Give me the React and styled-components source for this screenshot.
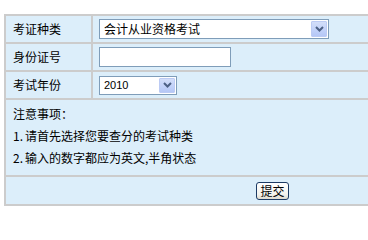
import React from "react";
import styled, { createGlobalStyle } from "styled-components";

const GlobalStyle = createGlobalStyle`
  html, body {
    margin: 0;
    background: #ffffff;
    overflow: hidden;
  }
  body {
    font-family: "Noto Sans CJK SC", "DejaVu Sans", sans-serif;
    font-size: 12px;
    color: #000000;
  }
`;

const Page = styled.div`
  width: 364px;
  padding: 14px 0 0 4px;
  overflow: hidden;
`;

const FormTable = styled.div`
  display: grid;
  grid-template-columns: 85px 1fr;
  grid-template-rows: 26px 26px 26px 75px 27px;
  gap: 2px;
  padding: 2px;
  width: 533px;
  background: #cccccc;
`;

const LabelCell = styled.div`
  background: #dceefa;
  display: flex;
  align-items: center;
  padding-left: 7px;
  line-height: 1;
`;

const FieldCell = styled.div`
  background: #dceefa;
  display: flex;
  align-items: center;
  padding-left: 6px;
`;

const NoticeCell = styled.div`
  grid-column: 1 / -1;
  background: #dceefa;
  padding: 3px 7px;
  line-height: 22px;
`;

const SubmitCell = styled.div`
  grid-column: 1 / -1;
  background: #dceefa;
  display: flex;
  align-items: center;
  justify-content: center;
`;

const SelectBox = styled.div`
  box-sizing: border-box;
  width: ${(p) => p.$width}px;
  height: ${(p) => p.$height}px;
  border: 1px solid #7f9db9;
  background: #ffffff;
  display: flex;
  align-items: center;
  padding: 1px;
`;

const SelectText = styled.span`
  flex: 1;
  padding-left: 3px;
  font-family: ${(p) =>
    p.$latin ? '"Liberation Sans", Arial, sans-serif' : "inherit"};
  font-size: ${(p) => (p.$latin ? "11px" : "12px")};
  line-height: 1;
`;

const ArrowButton = styled.span`
  box-sizing: border-box;
  width: 16px;
  height: 100%;
  border: 1px solid #bccbf4;
  border-radius: 1px;
  background: linear-gradient(180deg, #d3def9 0%, #c1d1f9 60%, #b5c7f6 100%);
  display: flex;
  align-items: center;
  justify-content: center;
`;

const TextInput = styled.input`
  box-sizing: border-box;
  width: 132px;
  height: 20px;
  border: 1px solid #7f9db9;
  background: #ffffff;
  padding: 0 3px;
  font-size: 12px;
  outline: none;
`;

const NoticeLine = styled.div`
  white-space: nowrap;
`;

const ItemNo = styled.span`
  display: inline-block;
  width: 12px;
`;

const SubmitButton = styled.button`
  box-sizing: border-box;
  width: 33px;
  height: 18px;
  padding: 0;
  border: 1px solid #1c3a64;
  border-radius: 3px;
  background: linear-gradient(180deg, #ffffff 0%, #f4f3ee 70%, #dedbcf 100%);
  font-family: "Noto Sans CJK SC", sans-serif;
  font-size: 12px;
  line-height: 16px;
  color: #000000;
`;

const Chevron = () => (
  <svg width="9" height="6" viewBox="0 0 9 6">
    <path d="M1 1 L4.5 4.5 L8 1" fill="none" stroke="#4d6185" strokeWidth="2" />
  </svg>
);

const Select = ({ width, height, latin, children }) => (
  <SelectBox $width={width} $height={height}>
    <SelectText $latin={latin}>{children}</SelectText>
    <ArrowButton>
      <Chevron />
    </ArrowButton>
  </SelectBox>
);

export default function App() {
  return (
    <Page>
      <GlobalStyle />
      <FormTable>
        <LabelCell>考证种类</LabelCell>
        <FieldCell>
          <Select width={230} height={20}>
            会计从业资格考试
          </Select>
        </FieldCell>

        <LabelCell>身份证号</LabelCell>
        <FieldCell>
          <TextInput type="text" />
        </FieldCell>

        <LabelCell>考试年份</LabelCell>
        <FieldCell>
          <Select width={78} height={19} latin>
            2010
          </Select>
        </FieldCell>

        <NoticeCell>
          <NoticeLine>注意事项：</NoticeLine>
          <NoticeLine>
            <ItemNo>1.</ItemNo>请首先选择您要查分的考试种类
          </NoticeLine>
          <NoticeLine>
            <ItemNo>2.</ItemNo>输入的数字都应为英文,半角状态
          </NoticeLine>
        </NoticeCell>

        <SubmitCell>
          <SubmitButton>提交</SubmitButton>
        </SubmitCell>
      </FormTable>
    </Page>
  );
}
